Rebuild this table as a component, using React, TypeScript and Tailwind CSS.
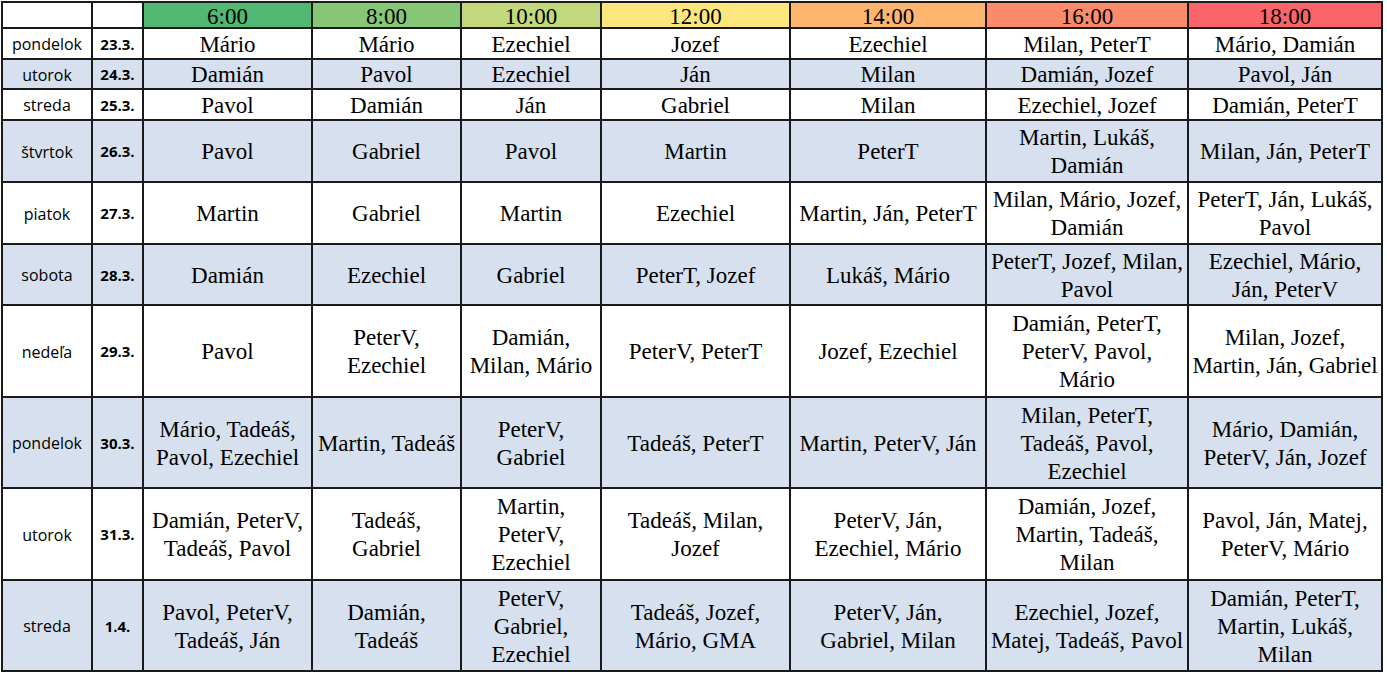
import React from 'react';

// Weekly duty schedule (spreadsheet look)

const HOURS = [
  { label: '6:00', bg: 'bg-[#50b873]' },
  { label: '8:00', bg: 'bg-[#87c676]' },
  { label: '10:00', bg: 'bg-[#c3d87c]' },
  { label: '12:00', bg: 'bg-[#fee67f]' },
  { label: '14:00', bg: 'bg-[#fdb570]' },
  { label: '16:00', bg: 'bg-[#fc8b6b]' },
  { label: '18:00', bg: 'bg-[#f9656a]' },
];

type Row = { day: string; date: string; cells: string[][] };

const ROWS: Row[] = [
  {
    day: 'pondelok',
    date: '23.3.',
    cells: [['Mário'], ['Mário'], ['Ezechiel'], ['Jozef'], ['Ezechiel'], ['Milan, PeterT'], ['Mário, Damián']],
  },
  {
    day: 'utorok',
    date: '24.3.',
    cells: [['Damián'], ['Pavol'], ['Ezechiel'], ['Ján'], ['Milan'], ['Damián, Jozef'], ['Pavol, Ján']],
  },
  {
    day: 'streda',
    date: '25.3.',
    cells: [['Pavol'], ['Damián'], ['Ján'], ['Gabriel'], ['Milan'], ['Ezechiel, Jozef'], ['Damián, PeterT']],
  },
  {
    day: 'štvrtok',
    date: '26.3.',
    cells: [['Pavol'], ['Gabriel'], ['Pavol'], ['Martin'], ['PeterT'], ['Martin, Lukáš,', 'Damián'], ['Milan, Ján, PeterT']],
  },
  {
    day: 'piatok',
    date: '27.3.',
    cells: [
      ['Martin'],
      ['Gabriel'],
      ['Martin'],
      ['Ezechiel'],
      ['Martin, Ján, PeterT'],
      ['Milan, Mário, Jozef,', 'Damián'],
      ['PeterT, Ján, Lukáš,', 'Pavol'],
    ],
  },
  {
    day: 'sobota',
    date: '28.3.',
    cells: [
      ['Damián'],
      ['Ezechiel'],
      ['Gabriel'],
      ['PeterT, Jozef'],
      ['Lukáš, Mário'],
      ['PeterT, Jozef, Milan,', 'Pavol'],
      ['Ezechiel, Mário,', 'Ján, PeterV'],
    ],
  },
  {
    day: 'nedeľa',
    date: '29.3.',
    cells: [
      ['Pavol'],
      ['PeterV,', 'Ezechiel'],
      ['Damián,', 'Milan, Mário'],
      ['PeterV, PeterT'],
      ['Jozef, Ezechiel'],
      ['Damián, PeterT,', 'PeterV, Pavol,', 'Mário'],
      ['Milan, Jozef,', 'Martin, Ján, Gabriel'],
    ],
  },
  {
    day: 'pondelok',
    date: '30.3.',
    cells: [
      ['Mário, Tadeáš,', 'Pavol, Ezechiel'],
      ['Martin, Tadeáš'],
      ['PeterV,', 'Gabriel'],
      ['Tadeáš, PeterT'],
      ['Martin, PeterV, Ján'],
      ['Milan, PeterT,', 'Tadeáš, Pavol,', 'Ezechiel'],
      ['Mário, Damián,', 'PeterV, Ján, Jozef'],
    ],
  },
  {
    day: 'utorok',
    date: '31.3.',
    cells: [
      ['Damián, PeterV,', 'Tadeáš, Pavol'],
      ['Tadeáš,', 'Gabriel'],
      ['Martin,', 'PeterV,', 'Ezechiel'],
      ['Tadeáš, Milan,', 'Jozef'],
      ['PeterV, Ján,', 'Ezechiel, Mário'],
      ['Damián, Jozef,', 'Martin, Tadeáš,', 'Milan'],
      ['Pavol, Ján, Matej,', 'PeterV, Mário'],
    ],
  },
  {
    day: 'streda',
    date: '1.4.',
    cells: [
      ['Pavol, PeterV,', 'Tadeáš, Ján'],
      ['Damián,', 'Tadeáš'],
      ['PeterV,', 'Gabriel,', 'Ezechiel'],
      ['Tadeáš, Jozef,', 'Mário, GMA'],
      ['PeterV, Ján,', 'Gabriel, Milan'],
      ['Ezechiel, Jozef,', 'Matej, Tadeáš, Pavol'],
      ['Damián, PeterT,', 'Martin, Lukáš,', 'Milan'],
    ],
  },
];

export default function App() {
  return (
    <div className="min-h-screen bg-white pt-px pl-px font-[family-name:Liberation_Serif,serif]">
      <div className="inline-grid gap-[2px] bg-[#1a1a1a] p-[2px] grid-cols-[88px_49px_167px_147px_138px_187px_194px_200px_192px] grid-rows-[24px_29px_28px_29px_60px_60px_59px_90px_89px_90px_89px]">
        {/* header */}
        <div className="bg-white" />
        <div className="bg-white" />
        {HOURS.map((h) => (
          <div
            key={h.label}
            className={`${h.bg} flex items-center justify-center pt-[3px] text-[23px] leading-[24px] text-black`}
          >
            {h.label}
          </div>
        ))}

        {/* body */}
        {ROWS.map((row, ri) => {
          const bg = ri % 2 === 1 ? 'bg-[#d6e0ee]' : 'bg-white';
          return (
            <React.Fragment key={ri}>
              <div className={`${bg} font-[family-name:Open_Sans,sans-serif] flex items-center justify-center pt-px text-[16px] text-black`}>
                {row.day}
              </div>
              <div className={`${bg} font-[family-name:Open_Sans,sans-serif] flex items-center justify-center pt-px text-[15px] font-bold text-black`}>
                {row.date}
              </div>
              {row.cells.map((lines, ci) => (
                <div
                  key={ci}
                  className={`${bg} flex flex-col items-center justify-center pt-[2px] text-center text-[23px] leading-[28px] text-black whitespace-nowrap overflow-hidden`}
                >
                  {lines.map((l, li) => (
                    <span key={li}>{l}</span>
                  ))}
                </div>
              ))}
            </React.Fragment>
          );
        })}
      </div>
    </div>
  );
}
